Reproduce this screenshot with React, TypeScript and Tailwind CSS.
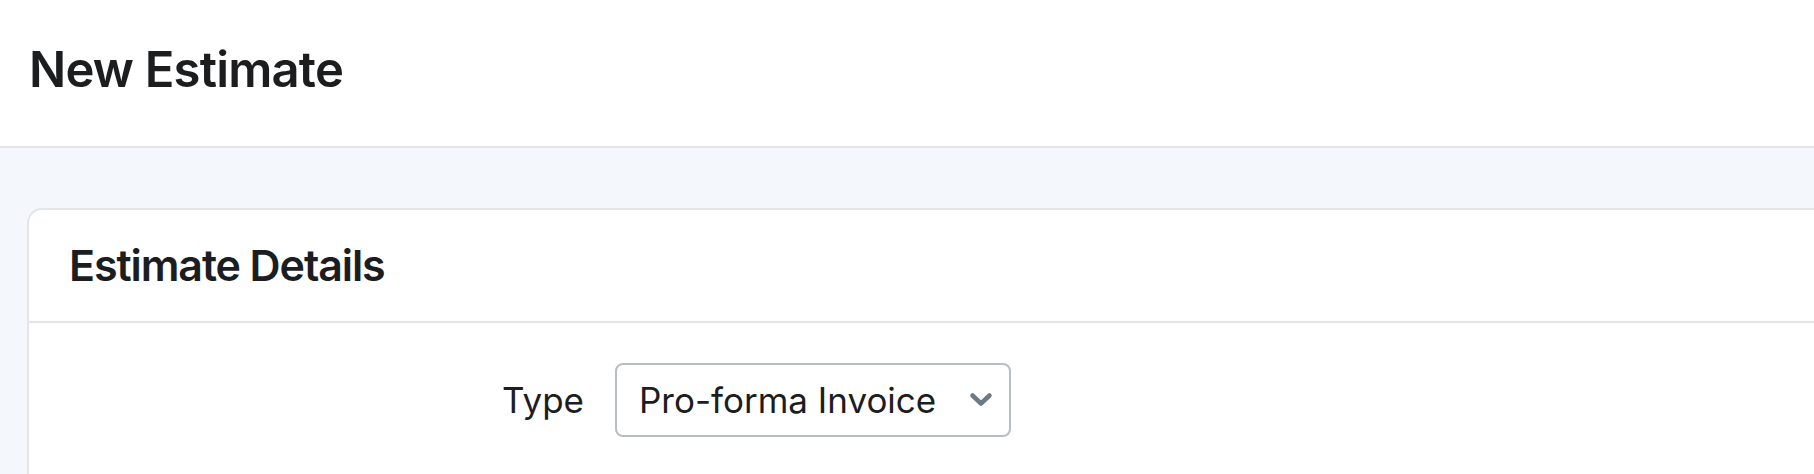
import React from 'react';

function Chevron() {
  return (
    <svg width="24" height="16" viewBox="0 0 24 16" fill="none" className="shrink-0">
      <polyline
        points="3.5,3.5 12,11.5 20.5,3.5"
        stroke="#6d7a83"
        strokeWidth="4.5"
        strokeLinecap="round"
        strokeLinejoin="round"
      />
    </svg>
  );
}

export default function App() {
  return (
    <div
      className="min-h-screen bg-[#f4f7fc] text-[#1c1d1f] antialiased"
      style={{ fontFamily: 'Inter, "Noto Sans", sans-serif' }}
    >
      <header className="h-[148px] bg-white border-b-2 border-[#e3e5ea] flex items-center px-[29px]">
        <h1 className="text-[49px] leading-none font-semibold tracking-[-0.8px] pb-[8px]">New Estimate</h1>
      </header>

      <main className="pt-[60px] pl-[27px]">
        <section className="bg-white border-2 border-r-0 border-[#e3e5ea] rounded-tl-[15px] min-h-[300px]">
          <div className="h-[113px] border-b-2 border-[#e3e5ea] flex items-center px-[40px]">
            <h2 className="text-[43px] leading-none font-semibold tracking-[-1.1px]">Estimate Details</h2>
          </div>

          <div className="flex items-center pt-[40px]">
            <label className="w-[555px] text-right text-[35px] leading-none">Type</label>
            <div className="ml-[31px] w-[396px] h-[74px] border-2 border-[#b9bec3] rounded-[8px] flex items-center justify-between pl-[22px] pr-[16px]">
              <span className="text-[35px] leading-none">Pro-forma Invoice</span>
              <Chevron />
            </div>
          </div>
        </section>
      </main>
    </div>
  );
}
